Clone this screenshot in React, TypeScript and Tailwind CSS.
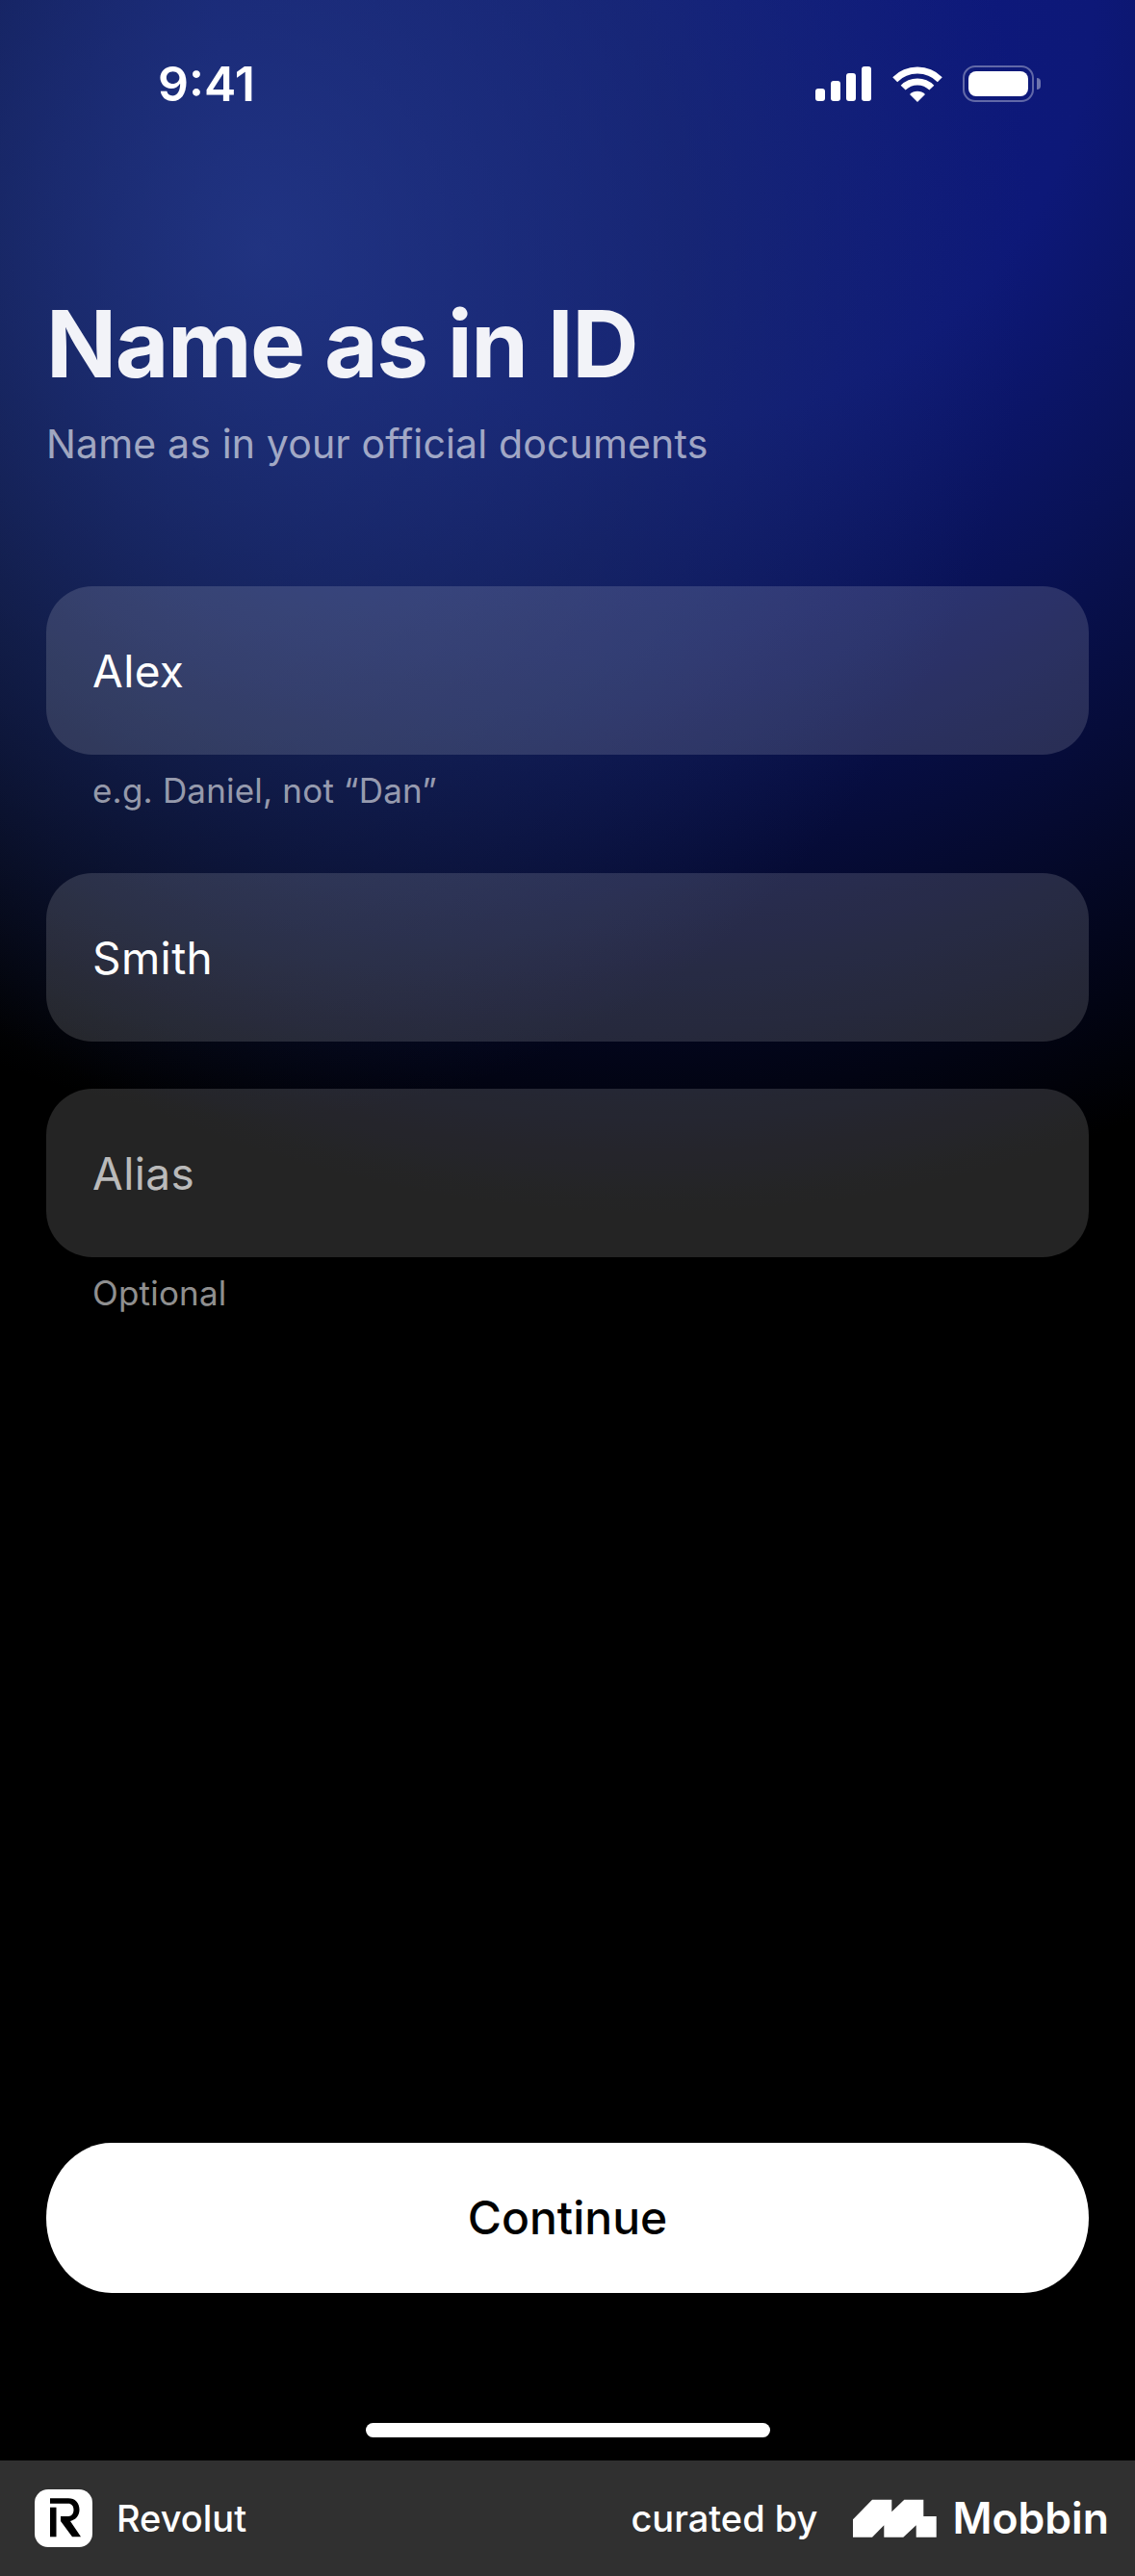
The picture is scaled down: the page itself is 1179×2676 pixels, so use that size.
function StatusIcons() {
  return (
    <div className="flex items-center">
      <svg width="58" height="36" viewBox="0 0 58 36" fill="#fff" className="mr-[22px]">
        <rect x="0" y="23" width="10" height="13" rx="3" />
        <rect x="16" y="15" width="10" height="21" rx="3" />
        <rect x="32" y="7" width="10" height="29" rx="3" />
        <rect x="48" y="0" width="10" height="36" rx="3" />
      </svg>
      <svg width="52" height="37" viewBox="0 0 52 37" fill="#fff" className="mr-[21px]">
        <path d="M2.7 13.7A33 33 0 0 1 49.3 13.7" fill="none" stroke="#fff" strokeWidth="7" />
        <path d="M11.15 22.15A21 21 0 0 1 40.85 22.15" fill="none" stroke="#fff" strokeWidth="7" />
        <path d="M26 37 18 29A11.3 11.3 0 0 1 34 29z" />
      </svg>
      <div className="flex items-center gap-[3px]">
        <div className="w-[74px] h-[38px] rounded-[13px] border-2 border-white/35 p-[4px]">
          <div className="w-full h-full rounded-[8px] bg-white" />
        </div>
        <div className="w-[4px] h-[12px] rounded-r-full bg-white/40" />
      </div>
    </div>
  )
}

function Field({ value, hint, muted }: { value: string; hint?: string; muted?: boolean }) {
  return (
    <div>
      <div className="h-[175px] rounded-[48px] bg-white/14 flex items-center px-[48px] pt-[2px]">
        <span className={`text-[46px] tracking-[0.4px] ${muted ? 'text-white/70' : 'text-white'}`}>{value}</span>
      </div>
      {hint && <p className="mt-[16px] px-[48px] text-[35px] leading-[42px] tracking-[0.2px] text-white/58">{hint}</p>}
    </div>
  )
}

export default function App() {
  return (
    <div className="relative w-[1179px] h-[2676px] flex flex-col bg-black text-white font-['Inter',sans-serif] overflow-hidden">
      <div className="flex-1 flex flex-col bg-[radial-gradient(ellipse_800px_900px_at_270px_260px,rgba(40,62,134,0.72),rgba(36,56,104,0.4)_55%,rgba(36,56,104,0)_100%),radial-gradient(ellipse_1300px_1260px_at_680px_0px,#0e1a82_0%,#0d1878_35%,#091256_55%,#050a30_75%,#000_100%)]">
        <div className="h-[174px] flex items-center justify-between pl-[164px] pr-[98px]">
          <span className="text-[50px] font-semibold leading-none">9:41</span>
          <StatusIcons />
        </div>
        <div className="px-[48px] pt-[125px]">
          <h1 className="text-[96px] leading-[116px] font-bold tracking-[-1.5px] text-[#f2f3f8]">Name as in ID</h1>
          <p className="mt-[21px] text-[41px] leading-[50px] tracking-[0.15px] text-white/60">Name as in your official documents</p>
        </div>
        <div className="px-[48px] mt-[123px] flex flex-col">
          <Field value="Alex" hint="e.g. Daniel, not “Dan”" />
          <div className="mt-[65px]">
            <Field value="Smith" />
          </div>
          <div className="mt-[49px]">
            <Field value="Alias" hint="Optional" muted />
          </div>
        </div>
        <div className="mt-auto px-[48px]">
          <button className="w-full h-[156px] rounded-[68px/78px] bg-white text-black text-[48px] font-medium">Continue</button>
        </div>
        <div className="flex justify-center pt-[135px] pb-[24px]">
          <div className="w-[420px] h-[15px] rounded-full bg-white" />
        </div>
      </div>
      <footer className="h-[120px] bg-[#303030] flex items-center justify-between pl-[36px] pr-[27px]">
        <div className="flex items-center gap-[25px]">
          <svg width="60" height="60" viewBox="0 0 60 60">
            <rect width="60" height="60" rx="14" fill="#fff" />
            <path d="M16 9.3H35C42 9.3 46.5 14 46.5 21 46.5 27 43 31.5 37 33L48 49.3H39L27 33V28H35C38.5 28 40.5 25 40.5 21 40.5 17 38 14.7 35 14.7H16z" fill="#000" />
            <rect x="16" y="18.7" width="6.5" height="30.6" fill="#000" />
          </svg>
          <span className="text-[38px] font-medium">Revolut</span>
        </div>
        <div className="flex items-center">
          <span className="text-[38px] font-medium mr-[37px]">curated by</span>
          <svg width="87" height="40" viewBox="0 0 87 40" fill="#fff" className="mr-[16px]">
            <path d="M0 21.3 20 .7H40.3V13.3L53.3 .7H73.3V18H86.7V39.7H65.7V27.3L52.3 39.7H32.3V27.3L20 39.7H0z" />
          </svg>
          <span className="text-[44.5px] font-semibold">Mobbin</span>
        </div>
      </footer>
    </div>
  )
}
